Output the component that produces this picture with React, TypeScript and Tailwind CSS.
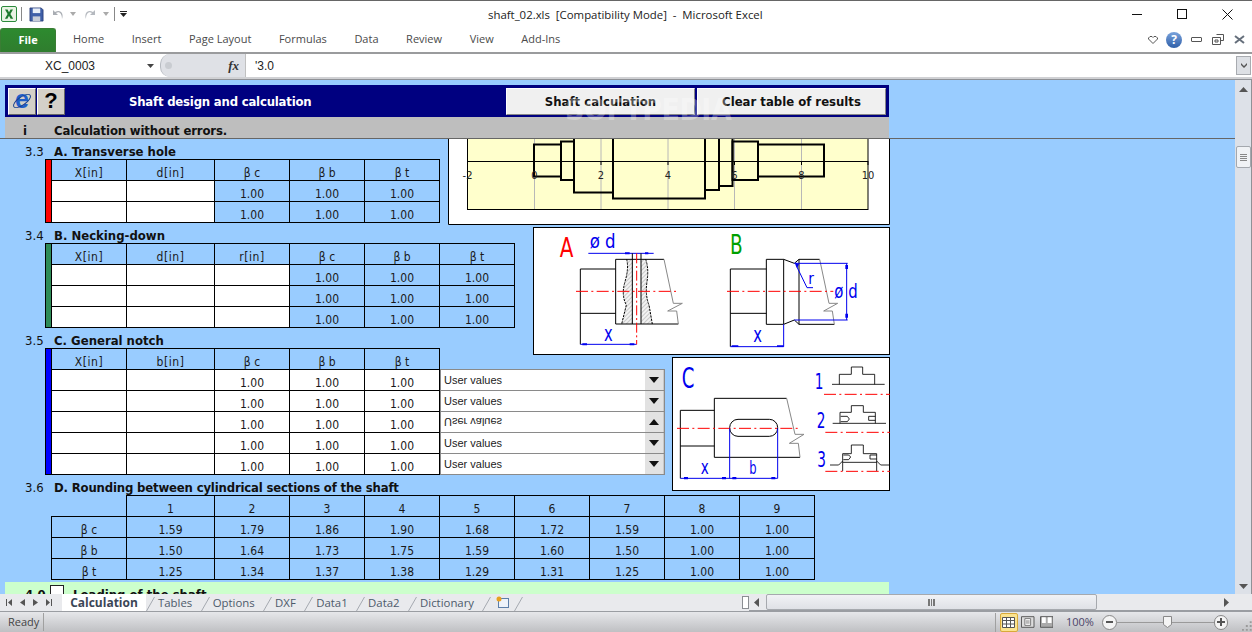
import type { ReactNode } from "react";

const cellFont = "font-['DejaVu_Sans_Condensed','DejaVu_Sans',sans-serif]";
const uiFont = "font-['Open_Sans','Noto_Sans',sans-serif]";
const hand = "'DejaVu Sans Condensed','DejaVu Sans',sans-serif";
const blue = "#0000ee";
const red = "#ff0000";

const ribbonTabs = ["Home", "Insert", "Page Layout", "Formulas", "Data", "Review", "View", "Add-Ins"];
const sheetTabs = ["Tables", "Options", "DXF", "Data1", "Data2", "Dictionary"];

const rounding = [
  { label: "β c", values: ["1.59", "1.79", "1.86", "1.90", "1.68", "1.72", "1.59", "1.00", "1.00"] },
  { label: "β b", values: ["1.50", "1.64", "1.73", "1.75", "1.59", "1.60", "1.50", "1.00", "1.00"] },
  { label: "β t", values: ["1.25", "1.34", "1.37", "1.38", "1.29", "1.31", "1.25", "1.00", "1.00"] },
];

function Cell({ children, white = false }: { children?: ReactNode; white?: boolean }) {
  return (
    <div
      className={`flex h-[21px] items-end justify-center border-r border-b border-black text-[12px] leading-[13px] text-[#1a1a1a] ${
        white ? "bg-white" : ""
      }`}
    >
      {children}
    </div>
  );
}

// X[in] style labels run a little wider than the condensed face
function HeadCell({ label }: { label: string }) {
  return (
    <Cell>
      <span className={label.includes("[") ? "tracking-[0.6px]" : ""}>{label}</span>
    </Cell>
  );
}

function SectionTitle({ num, title, tight = false }: { num: string; title: string; tight?: boolean }) {
  return (
    <div className="flex h-[20px] items-end text-[13px] leading-[14px] text-[#111]">
      <span className="w-[49px] pl-[20px]">{num}</span>
      <span className={`font-bold ${tight ? "tracking-[-0.17px]" : ""}`}>{title}</span>
    </div>
  );
}

function Stripe({ color }: { color: string }) {
  return <div className={`w-[6px] border-r border-b border-black ${color}`} />;
}

function Dropdown({ flipped = false }: { flipped?: boolean }) {
  return (
    <div className="-mt-px flex h-[22px] w-[225px] items-stretch border border-[#8a8a8a] bg-white first:mt-0">
      <span
        className={`flex-1 pl-[3px] font-['Liberation_Sans',sans-serif] text-[11px] leading-[21px] text-[#222] ${
          flipped ? "-scale-y-100" : ""
        }`}
      >
        User values
      </span>
      <span className="flex w-[19px] items-center justify-center border-r border-[#c8c8c8] bg-[#e2e2e2]">
        <svg width="10" height="6" viewBox="0 0 10 6" className={flipped ? "rotate-180" : ""}>
          <path d="M0 0h10L5 6z" fill="#111" />
        </svg>
      </span>
    </div>
  );
}

function ShaftChart() {
  const ticks = [
    { x: 467.5, label: "-2" },
    { x: 534.5, label: "0" },
    { x: 601, label: "2" },
    { x: 668, label: "4" },
    { x: 734.5, label: "6" },
    { x: 801.5, label: "8" },
    { x: 868, label: "10" },
  ];
  const sections = [
    [534, 561, 144.5, 176.5],
    [561, 574, 141.5, 180],
    [574, 613, 130, 192.5],
    [613, 705, 130, 198.5],
    [705, 719, 130, 190],
    [719, 732.5, 130, 186],
    [732.5, 758, 141.5, 180],
    [758, 824, 144.5, 176.5],
  ];
  return (
    <svg width="442" height="86" viewBox="448 139 442 86" className="block bg-white">
      <rect x="467.5" y="130" width="400.5" height="79.5" fill="#ffffcc" stroke="#000" />
      {ticks.slice(1, 6).map((t) => (
        <line key={t.x} x1={t.x} x2={t.x} y1="139" y2="209" stroke="#b8b8b8" />
      ))}
      <line x1="467.5" x2="868" y1="161.5" y2="161.5" stroke="#000" />
      {ticks.map((t) => (
        <line key={t.label} x1={t.x} x2={t.x} y1="161" y2="165" stroke="#000" />
      ))}
      {sections.map(([x1, x2, y1, y2]) => (
        <rect key={x1} x={x1} y={y1} width={x2 - x1} height={y2 - y1} fill="none" stroke="#000" strokeWidth="2" />
      ))}
      {ticks.map((t) => (
        <text key={t.label} x={t.x} y="179" textAnchor="middle" fontSize="11" fontFamily={hand} fill="#222">
          {t.label}
        </text>
      ))}
      <path d="M448.5 139V224.5H889.5V139" fill="none" stroke="#000" />
    </svg>
  );
}

function NotchDiagramAB() {
  return (
    <svg width="357" height="128" viewBox="24 6 1071 384" className="block bg-white">
      <defs>
        <pattern id="hatch" width="9" height="9" patternUnits="userSpaceOnUse" patternTransform="rotate(-45)">
          <rect width="9" height="9" fill="#f2f2f2" />
          <line x1="0" y1="0" x2="9" y2="0" stroke="#a0a0a0" strokeWidth="3" />
        </pattern>
      </defs>
      <rect x="25.5" y="7.5" width="1068" height="381" fill="none" stroke="#000" strokeWidth="3" />
      {/* A */}
      <text x="104" y="95" fontSize="82" textLength="41" lengthAdjust="spacingAndGlyphs" fontFamily={hand} fill={red}>A</text>
      <text x="194" y="70" fontSize="60" textLength="78" lengthAdjust="spacingAndGlyphs" fontFamily={hand} fill={blue}>ø d</text>
      <path d="M190 85H386" stroke={blue} strokeWidth="3" />
      <path d="M300 82h14v6h-14zM360 82h10v6h-10z" fill={blue} />
      <path d="M305 103Q312 130 300 170T304 240L290 297H322V103zM362 103Q372 130 366 170T372 240L382 297H348V103z" fill="url(#hatch)" />
      <path d="M166 132H272M166 265H272M166 132V358M272 103V297M272 103H417M272 297H460" stroke="#000" strokeWidth="3" fill="none" />
      <path d="M166 358H335" stroke={blue} strokeWidth="3" fill="none" />
      <path d="M322 85V297M348 85V297" stroke="#000" strokeWidth="3" />
      <path d="M305 103Q312 130 300 170T304 240L290 297M362 103Q372 130 366 170T372 240L382 297" stroke="#000" strokeWidth="3" strokeDasharray="7 3" fill="none" />
      <path d="M417 103L445 235H472L428 258H455L460 297" stroke="#888" strokeWidth="3" fill="none" />
      <path d="M153 199H458" stroke={red} strokeWidth="3" strokeDasharray="36 10 6 10" />
      <path d="M335 85V358" stroke={red} strokeWidth="3" strokeDasharray="30 8 6 8" />
      <path d="M172 355h14v6h-14zM314 355h14v6h-14z" fill={blue} />
      <text x="237" y="348" fontSize="62" textLength="26" lengthAdjust="spacingAndGlyphs" fontFamily={hand} fill={blue}>x</text>
      {/* B */}
      <text x="615" y="88" fontSize="82" textLength="38" lengthAdjust="spacingAndGlyphs" fontFamily={hand} fill="#00a000">B</text>
      <path d="M616 132H724M616 265H724M616 132V365M724 103V298H776V103H724M776 103L808 115M776 298L808 285M808 115L822 103H884M808 285L822 298H928M822 103V298" stroke="#000" strokeWidth="3" fill="none" />
      <path d="M884 103L912 235H938L896 258H922L928 298" stroke="#888" strokeWidth="3" fill="none" />
      <path d="M616 365H776V298M808 115H968M808 285H968M965 115V285M812 118L846 188H864" stroke={blue} strokeWidth="3" fill="none" />
      <path d="M810 112l12 6-6 12zM961 120h8v12h-8zM961 266h8v12h-8zM620 361h20v5h-20zM756 361h20v5h-20z" fill={blue} />
      <path d="M606 199H925" stroke={red} strokeWidth="3" strokeDasharray="36 10 6 10" />
      <text x="850" y="176" fontSize="46" fontFamily={hand} fill={blue}>r</text>
      <text x="928" y="220" fontSize="60" textLength="70" lengthAdjust="spacingAndGlyphs" fontFamily={hand} fill={blue}>ø d</text>
      <text x="685" y="352" fontSize="62" textLength="26" lengthAdjust="spacingAndGlyphs" fontFamily={hand} fill={blue}>x</text>
    </svg>
  );
}

function NotchDiagramC() {
  return (
    <svg width="218" height="134" viewBox="726 6 654 402" className="block bg-white">
      <rect x="727.5" y="7.5" width="651" height="399" fill="none" stroke="#000" strokeWidth="3" />
      <text x="755" y="100" fontSize="86" textLength="38" lengthAdjust="spacingAndGlyphs" fontFamily={hand} fill={blue}>C</text>
      <path d="M751 166H853M751 273H853M751 166V370M853 130V307M853 130H1070M853 307H1110" stroke="#000" strokeWidth="3" fill="none" />
      <rect x="899" y="193" width="144" height="51" rx="25" fill="none" stroke="#000" strokeWidth="3" />
      <path d="M1070 130L1095 238H1122L1078 265H1105L1110 307" stroke="#888" strokeWidth="3" fill="none" />
      <path d="M741 220H1108" stroke={red} strokeWidth="3" strokeDasharray="36 10 6 10" />
      <path d="M751 370H1043M899 220V370M1043 220V370" stroke={blue} strokeWidth="3" fill="none" />
      <path d="M762 366h12v7h-12zM876 366h12v7h-12zM907 366h12v7h-12zM1024 366h12v7h-12z" fill={blue} />
      <text x="812" y="358" fontSize="56" textLength="24" lengthAdjust="spacingAndGlyphs" fontFamily={hand} fill={blue}>x</text>
      <text x="958" y="358" fontSize="52" textLength="22" lengthAdjust="spacingAndGlyphs" fontFamily={hand} fill={blue}>b</text>

      <text x="1154" y="102" fontSize="64" textLength="26" lengthAdjust="spacingAndGlyphs" fontFamily={hand} fill={blue}>1</text>
      <path d="M1206 88H1364M1228 88V58H1264V36H1298V58H1334V88" stroke="#000" strokeWidth="2.500" fill="none" />
      <path d="M1182 118H1380" stroke={red} strokeWidth="3" strokeDasharray="36 10 6 10" />

      <text x="1160" y="220" fontSize="64" textLength="26" lengthAdjust="spacingAndGlyphs" fontFamily={hand} fill={blue}>2</text>
      <path d="M1208 205H1368M1230 205V172H1264V152H1300V172H1336V205M1232 184H1252L1258 192L1252 200H1232M1336 184H1316V196H1336" stroke="#000" strokeWidth="2.500" fill="none" />
      <path d="M1186 232H1380" stroke={red} strokeWidth="3" strokeDasharray="36 10 6 10" />

      <text x="1162" y="336" fontSize="64" textLength="26" lengthAdjust="spacingAndGlyphs" fontFamily={hand} fill={blue}>3</text>
      <path d="M1200 330H1226L1238 318V348M1238 322H1340M1340 348V318L1352 330H1378M1238 296H1264V270H1300V296H1340V318M1238 296V318M1240 300H1256L1262 306L1256 314H1240M1340 300H1320V312H1340" stroke="#000" strokeWidth="2.500" fill="none" />
      <path d="M1186 349H1380" stroke={red} strokeWidth="3" strokeDasharray="36 10 6 10" />
    </svg>
  );
}

function TitleBar() {
  return (
    <div className={`relative flex h-[27px] shrink-0 items-center border-t border-[#666] bg-white ${uiFont}`}>
      <svg width="17" height="17" viewBox="0 0 17 17" className="ml-[1px]">
        <rect x="0.5" y="0.5" width="15" height="15" rx="1.5" fill="#e9f3e4" stroke="#2c8a3c" />
        <path d="M4 3.500h2.600L8 6.200l1.500-2.700h2.500L9.400 8l2.800 4.700H9.600L8 9.800l-1.600 2.900H3.900L6.600 8z" fill="#1f7a2f" />
      </svg>
      <span className="ml-[3px] h-[14px] w-px bg-[#888]" />
      <svg width="15" height="15" viewBox="0 0 16 16" className="ml-[7px]">
        <path d="M1 1h12l2 2v12H1z" fill="#3f5fa8" stroke="#23356f" strokeWidth="0.8" />
        <rect x="4" y="1.500" width="8" height="5" fill="#e8eef8" />
        <rect x="4" y="10" width="8" height="5" fill="#c8cdd8" />
      </svg>
      <svg width="13" height="13" viewBox="0 0 13 13" className="ml-[8px]">
        <path d="M1 2v5h5L4 5c3-2 6 0 6 6 2-5-1-10-7-7z" fill="#a9adb3" />
      </svg>
      <svg width="6" height="4" viewBox="0 0 6 4" className="ml-[5px]"><path d="M0 0h6L3 4z" fill="#aaa" /></svg>
      <svg width="13" height="13" viewBox="0 0 13 13" className="ml-[7px] -scale-x-100">
        <path d="M1 2v5h5L4 5c3-2 6 0 6 6 2-5-1-10-7-7z" fill="#b5b9bf" />
      </svg>
      <svg width="6" height="4" viewBox="0 0 6 4" className="ml-[7px]"><path d="M0 0h6L3 4z" fill="#aaa" /></svg>
      <span className="ml-[5px] h-[14px] w-px bg-[#888]" />
      <svg width="7" height="6" viewBox="0 0 7 6" className="ml-[5px]"><path d="M0 0h7v1H0zM0 2h7L3.500 6z" fill="#222" /></svg>
      <span className="absolute left-[488px] top-[5px] whitespace-pre text-[11.4px] leading-[17px] text-[#222]">
        shaft_02.xls  [Compatibility Mode]  -  Microsoft Excel
      </span>
      <div className="ml-auto flex items-center pr-[19px]">
        <span className="h-px w-[10px] bg-[#111]" />
        <span className="ml-[35px] h-[10px] w-[10px] border border-[#111]" />
        <svg width="11" height="11" viewBox="0 0 11 11" className="ml-[35px]">
          <path d="M0.500 0.500l10 10M10.500 0.500l-10 10" stroke="#111" />
        </svg>
      </div>
    </div>
  );
}

function RibbonTabs() {
  return (
    <div className={`flex h-[27px] shrink-0 items-end border-b-2 border-[#9a9b9d] bg-white ${uiFont}`}>
      <div className="flex h-[24px] w-[56px] items-center justify-center rounded-t-[3px] border border-b-0 border-[#3a7d34] bg-gradient-to-b from-[#2d8a2f] to-[#2f7d2e] text-[11px] font-bold text-white">
        File
      </div>
      <div className="flex h-[25px] items-center gap-[27.6px] pl-[17px] text-[11px] text-[#4a4a4a]">
        {ribbonTabs.map((t) => (
          <span key={t}>{t}</span>
        ))}
      </div>
      <div className="ml-auto flex h-[25px] items-center pr-[7px]">
        <svg width="10" height="8" viewBox="0 0 10 8" className="mr-[8px]">
          <path d="M2 .5h2l1 1 1-1h2l1.500 1.500v1L5 7.500.5 3V2z" fill="none" stroke="#555" />
        </svg>
        <span className="flex h-[16px] w-[16px] items-center justify-center rounded-full bg-gradient-to-b from-[#7aa3dc] to-[#2f5fa8] text-[12px] font-bold leading-none text-white">
          ?
        </span>
        <span className="ml-[9px] h-[5px] w-[11px] rounded-[1px] border border-[#555]" />
        <svg width="12" height="11" viewBox="0 0 12 11" className="ml-[10px]">
          <path d="M4.500.5h7v6h-3M.5 3.500h8v7h-8zM3 6h3v2H3z" fill="none" stroke="#555" />
        </svg>
        <svg width="11" height="9" viewBox="0 0 11 9" className="ml-[10px]">
          <path d="M1 1l9 7M10 1L1 8" stroke="#66707c" strokeWidth="2" />
        </svg>
      </div>
    </div>
  );
}

function FormulaBar() {
  return (
    <div className="flex h-[25px] shrink-0 border-b-2 border-[#d0d1d4] bg-white font-['Liberation_Sans',sans-serif]">
      <div className="relative flex w-[160px] items-center pl-[45px] text-[12px] text-[#222]">
        XC_0003
        <svg width="7" height="4" viewBox="0 0 7 4" className="absolute left-[147px] top-[10px]"><path d="M0 0h7L3.500 4z" fill="#444" /></svg>
      </div>
      <div className="flex w-[85px] items-center rounded-l-[10px] border-l border-[#b6bac0] bg-[#dfe1e6] pl-[4px] pr-[6px]">
        <span className="h-[7px] w-[7px] rounded-full bg-[#c9ccd1]" />
        <span className="ml-auto font-['Liberation_Serif',serif] text-[13px] font-bold italic text-[#333]">fx</span>
      </div>
      <div className="flex flex-1 items-center border-l border-[#c0c0c0] pl-[9px] text-[12px] text-[#222]">'3.0</div>
      <div className="mt-[2px] flex h-[19px] w-[15px] items-center justify-center border border-[#a8abb0] bg-[#dde0e5]">
        <svg width="8" height="5" viewBox="0 0 8 5"><path d="M1 0l3 3 3-3v2L4 5 1 2z" fill="#555" /></svg>
      </div>
      <div className="w-px" />
    </div>
  );
}

function SheetHeader() {
  return (
    <>
      <div className="flex h-[32px] items-center bg-[#000080] px-[3px]">
        <div className="flex h-[27px] w-[28px] items-center justify-center border border-t-white border-l-white border-r-[#666] border-b-[#666] bg-[#d4d0c8]">
          <svg width="22" height="22" viewBox="0 0 22 22">
            <text x="11" y="18" textAnchor="middle" fontSize="25" fontWeight="700" fontFamily="'Liberation Sans',sans-serif" fill="#1f5fc8">e</text>
            <ellipse cx="11" cy="11" rx="10" ry="4" fill="none" stroke="#17408f" strokeWidth="1" transform="rotate(-35 11 11)" />
          </svg>
        </div>
        <div className="ml-px flex h-[27px] w-[28px] items-center justify-center border border-t-white border-l-white border-r-[#666] border-b-[#666] bg-[#d4d0c8] font-['Liberation_Sans',sans-serif] text-[22px] font-bold leading-none text-black">
          ?
        </div>
        <span className="ml-[64px] w-[377px] pt-px text-[13px] font-bold tracking-[-0.2px] text-white">Shaft design and calculation</span>
        <div className="flex h-[27px] w-[189px] items-center justify-center border border-t-white border-l-white border-r-[#888] border-b-[#888] bg-[#f0f0f0] pt-px text-[13px] font-bold text-[#111]">
          Shaft calculation
        </div>
        <div className="ml-[2px] flex h-[27px] flex-1 items-center justify-center border border-t-white border-l-white border-r-[#888] border-b-[#888] bg-[#f0f0f0] pt-px text-[13px] font-bold text-[#111]">
          Clear table of results
        </div>
      </div>
      <div className="flex h-[21px] items-end bg-[#bebebe] text-[13px] font-bold leading-[15px] tracking-[-0.15px] text-[#111]">
        <span className="w-[49px] pl-[18px]">i</span>
        <span>Calculation without errors.</span>
      </div>
    </>
  );
}

function SheetTabsBar() {
  return (
    <div className={`flex h-[17px] shrink-0 items-stretch bg-[#e9eaed] ${uiFont}`}>
      <div className="flex w-[62px] items-center gap-[8px] pl-[6px]">
        <svg width="6" height="7" viewBox="0 0 6 7"><path d="M0 0h1v7H0zM6 0v7L2 3.500z" fill="#555" /></svg>
        <svg width="5" height="7" viewBox="0 0 5 7"><path d="M5 0v7L0 3.500z" fill="#555" /></svg>
        <svg width="5" height="7" viewBox="0 0 5 7"><path d="M0 0v7l5-3.500z" fill="#555" /></svg>
        <svg width="6" height="7" viewBox="0 0 6 7"><path d="M5 0h1v7H5zM0 0v7l4-3.500z" fill="#555" /></svg>
      </div>
      <div className="flex w-[84px] items-center justify-center bg-white text-[12px] font-bold text-[#3b4656]">Calculation</div>
      <div className="flex w-[595px] items-center overflow-hidden text-[11.4px] text-[#4d5a6b]">
        {sheetTabs.map((t) => (
          <span key={t} className="flex h-full items-center gap-[3px] pr-[8.4px]">
            <svg width="9" height="17" viewBox="0 0 9 17"><path d="M0.500 17L8.500 3" stroke="#a5a9b0" fill="none" /></svg>
            {t}
          </span>
        ))}
        <svg width="9" height="17" viewBox="0 0 9 17"><path d="M0.500 17L8.500 3" stroke="#a5a9b0" fill="none" /></svg>
        <svg width="14" height="13" viewBox="0 0 14 13" className="ml-[5px]">
          <rect x="2.500" y="2.500" width="10" height="9" fill="#eef3fa" stroke="#5d7fa8" />
          <circle cx="3" cy="3" r="2.500" fill="#e8a020" />
        </svg>
        <svg width="9" height="17" viewBox="0 0 9 17" className="ml-[4px]"><path d="M0.500 17L8.500 3" stroke="#a5a9b0" fill="none" /></svg>
      </div>
      <div className="flex w-[8px] items-center justify-center">
        <span className="h-[13px] w-[7px] border border-[#8a8d92] bg-white" />
      </div>
      <div className="flex flex-1 items-center border-b border-[#9a9da2]">
        <svg width="5" height="9" viewBox="0 0 5 9" className="ml-[5px]"><path d="M5 0v9L0 4.500z" fill="#555" /></svg>
        <div className="ml-[7px] flex h-[16px] w-[331px] items-center justify-center rounded-[2px] border border-[#a6a9ae] bg-gradient-to-b from-[#f1f2f5] to-[#dfe1e6]">
          <span className="h-[7px] w-[7px] border-x border-[#777] bg-[linear-gradient(90deg,#777_1px,transparent_1px)] bg-[length:2px_100%]" />
        </div>
        <svg width="5" height="9" viewBox="0 0 5 9" className="ml-[127px]"><path d="M0 0v9l5-4.500z" fill="#555" /></svg>
      </div>
    </div>
  );
}

function StatusBar() {
  return (
    <div className={`flex h-[21px] shrink-0 items-center border-t border-[#9a9da2] bg-gradient-to-b from-[#e6e7ea] to-[#bfc0c3] ${uiFont}`}>
      <span className="w-[45px] border-r border-[#a0a0a0] pl-[8px] text-[11px] leading-[18px] text-[#444]">Ready</span>
      <span className="ml-[951px] h-[19px] w-px bg-[#a0a0a0]" />
      <div className="ml-[4px] flex h-[19px] w-[19px] items-center justify-center rounded-[2px] border border-[#d8a93a] bg-[#fbe38f]">
        <svg width="13" height="11" viewBox="0 0 13 11"><path d="M.5.500h12v10H.5zM.5 3.500h12M.5 7h12M4.500.500v10M8.500.500v10" fill="#fff" stroke="#555" /></svg>
      </div>
      <svg width="14" height="12" viewBox="0 0 14 12" className="ml-[3px]"><path d="M.5.500h13v11H.5z" fill="#ddd" stroke="#555" /><path d="M4 2.500h6v7H4zM5 5h4M5 7h4" fill="#fff" stroke="#777" /></svg>
      <svg width="14" height="12" viewBox="0 0 14 12" className="ml-[5px]"><path d="M.5.500h13v11H.5z" fill="#aaa" stroke="#555" /><path d="M2 1h4v6H2zM8 1h4v6H8z" fill="#fff" /></svg>
      <span className="ml-[13px] text-[11px] text-[#4b4468]">100%</span>
      <span className="ml-[8px] flex h-[15px] w-[15px] items-center justify-center rounded-full border border-[#888] bg-[#f4f4f4]">
        <span className="h-[2px] w-[7px] bg-[#555]" />
      </span>
      <div className="relative h-px w-[101px] bg-[#9a9a9a]">
        <svg width="9" height="12" viewBox="0 0 9 12" className="absolute left-[46px] top-[-6px]"><path d="M.5.500h8v8L4.500 11.500.5 8.500z" fill="#f4f4f4" stroke="#888" /></svg>
      </div>
      <span className="relative flex h-[15px] w-[15px] items-center justify-center rounded-full border border-[#888] bg-[#f4f4f4]">
        <span className="h-[2px] w-[8px] bg-[#555]" />
        <span className="absolute h-[8px] w-[2px] bg-[#555]" />
      </span>
      <svg width="10" height="10" viewBox="0 0 10 10" className="ml-[14px] mt-[8px]"><path d="M8 0h2v2H8zM4 4h2v2H4zM8 4h2v2H8zM0 8h2v2H0zM4 8h2v2H4zM8 8h2v2H8z" fill="#9a9a9a" /></svg>
    </div>
  );
}

export default function App() {
  return (
    <div className={`flex h-[632px] w-[1252px] flex-col overflow-hidden bg-white ${cellFont}`}>
      <TitleBar />
      <RibbonTabs />
      <FormulaBar />
      <div className="flex min-h-0 flex-1 border-t border-[#8f9196]">
        <div className="relative min-w-0 flex-1 overflow-hidden bg-[#99ccff] pt-[5px]">
          <div className="ml-[5px] w-[884px]">
            <SheetHeader />
          </div>
          <div className="h-px bg-[#666]" />
          <div className="ml-[5px] w-[885px]">
            <div className="grid">
              <div className="col-start-1 row-start-1">
                <SectionTitle num="3.3" title="A. Transverse hole" />
                <div className="ml-[40px] flex w-fit border-t border-l border-black">
                  <Stripe color="bg-[#ff0000]" />
                  <div className="grid grid-cols-[75px_88px_75px_75px_75px]">
                    {["X[in]", "d[in]", "β c", "β b", "β t"].map((h) => (
                      <HeadCell key={h} label={h} />
                    ))}
                    {[0, 1].map((r) => (
                      <div key={r} className="contents">
                        <Cell white />
                        <Cell white />
                        <Cell>1.00</Cell>
                        <Cell>1.00</Cell>
                        <Cell>1.00</Cell>
                      </div>
                    ))}
                  </div>
                </div>
                <SectionTitle num="3.4" title="B. Necking-down" />
                <div className="ml-[40px] flex w-fit border-t border-l border-black">
                  <Stripe color="bg-[#2e8b57]" />
                  <div className="grid grid-cols-[75px_88px_75px_75px_75px_75px]">
                    {["X[in]", "d[in]", "r[in]", "β c", "β b", "β t"].map((h) => (
                      <HeadCell key={h} label={h} />
                    ))}
                    {[0, 1, 2].map((r) => (
                      <div key={r} className="contents">
                        <Cell white />
                        <Cell white />
                        <Cell white />
                        <Cell>1.00</Cell>
                        <Cell>1.00</Cell>
                        <Cell>1.00</Cell>
                      </div>
                    ))}
                  </div>
                </div>
                <SectionTitle num="3.5" title="C. General notch" />
                <div className="ml-[40px] flex w-fit">
                  <div className="flex border-t border-l border-black">
                    <Stripe color="bg-[#0000ff]" />
                    <div className="grid grid-cols-[75px_88px_75px_75px_75px]">
                      {["X[in]", "b[in]", "β c", "β b", "β t"].map((h) => (
                        <HeadCell key={h} label={h} />
                      ))}
                      {[0, 1, 2, 3, 4].map((r) => (
                        <div key={r} className="contents">
                          <Cell white />
                          <Cell white />
                          <Cell white>1.00</Cell>
                          <Cell white>1.00</Cell>
                          <Cell white>1.00</Cell>
                        </div>
                      ))}
                    </div>
                  </div>
                  <div className="flex flex-col pt-[21px]">
                    {[0, 1, 2, 3, 4].map((r) => (
                      <Dropdown key={r} flipped={r === 2} />
                    ))}
                  </div>
                </div>
                <SectionTitle num="3.6" title="D. Rounding between cylindrical sections of the shaft" tight />
              </div>
              <div className="col-start-1 row-start-1 flex flex-col items-end gap-[2px]">
                <ShaftChart />
                <NotchDiagramAB />
                <NotchDiagramC />
              </div>
            </div>
            <div className="ml-[46px] grid w-fit grid-cols-[76px_88px_75px_75px_75px_75px_75px_75px_75px_75px]">
              <div className="h-[22px] border-r border-b border-black" />
              {[1, 2, 3, 4, 5, 6, 7, 8, 9].map((n) => (
                <div key={n} className="flex h-[22px] items-end justify-center border-t border-r border-b border-black text-[12px] leading-[13px] text-[#1a1a1a]">
                  {n}
                </div>
              ))}
              {rounding.map((row) => (
                <div key={row.label} className="contents">
                  <div className="flex h-[21px] items-end justify-center border-r border-b border-l border-black text-[12px] leading-[13px] text-[#1a1a1a]">
                    {row.label}
                  </div>
                  {row.values.map((v, i) => (
                    <Cell key={i}>{v}</Cell>
                  ))}
                </div>
              ))}
            </div>
            <div className="mt-[2px] flex h-[20px] w-[884px] items-start bg-[#ccffcc] text-[13px] font-bold leading-[18px] text-[#111]">
              <span className="w-[45px] pl-[20px] pt-[4px]">4.0</span>
              <span className="mt-[3px] h-[14px] w-[14px] border border-[#222] bg-white" />
              <span className="ml-[9px] pt-[4px]">Loading of the shaft</span>
            </div>
          </div>
          <span className="pointer-events-none absolute left-[565px] top-[15px] text-[30px] font-bold leading-[30px] tracking-[-0.5px] text-white/30">
            SOFTPEDIA
          </span>
        </div>
        <div className="flex w-[17px] flex-col items-center border-r border-[#8f9196] bg-[#dde1e8] pt-[7px]">
          <svg width="9" height="5" viewBox="0 0 9 5"><path d="M4.500 0L9 5H0z" fill="#555" /></svg>
          <div className="mt-[54px] flex h-[22px] w-[15px] flex-col items-center justify-center gap-[1px] rounded-[2px] border border-[#a4a8ae] bg-[#f0f2f5]">
            <span className="h-px w-[7px] bg-[#888]" />
            <span className="h-px w-[7px] bg-[#888]" />
            <span className="h-px w-[7px] bg-[#888]" />
            <span className="h-px w-[7px] bg-[#888]" />
          </div>
          <svg width="9" height="5" viewBox="0 0 9 5" className="mt-auto mb-[5px]"><path d="M4.500 5L9 0H0z" fill="#555" /></svg>
        </div>
      </div>
      <SheetTabsBar />
      <StatusBar />
    </div>
  );
}
